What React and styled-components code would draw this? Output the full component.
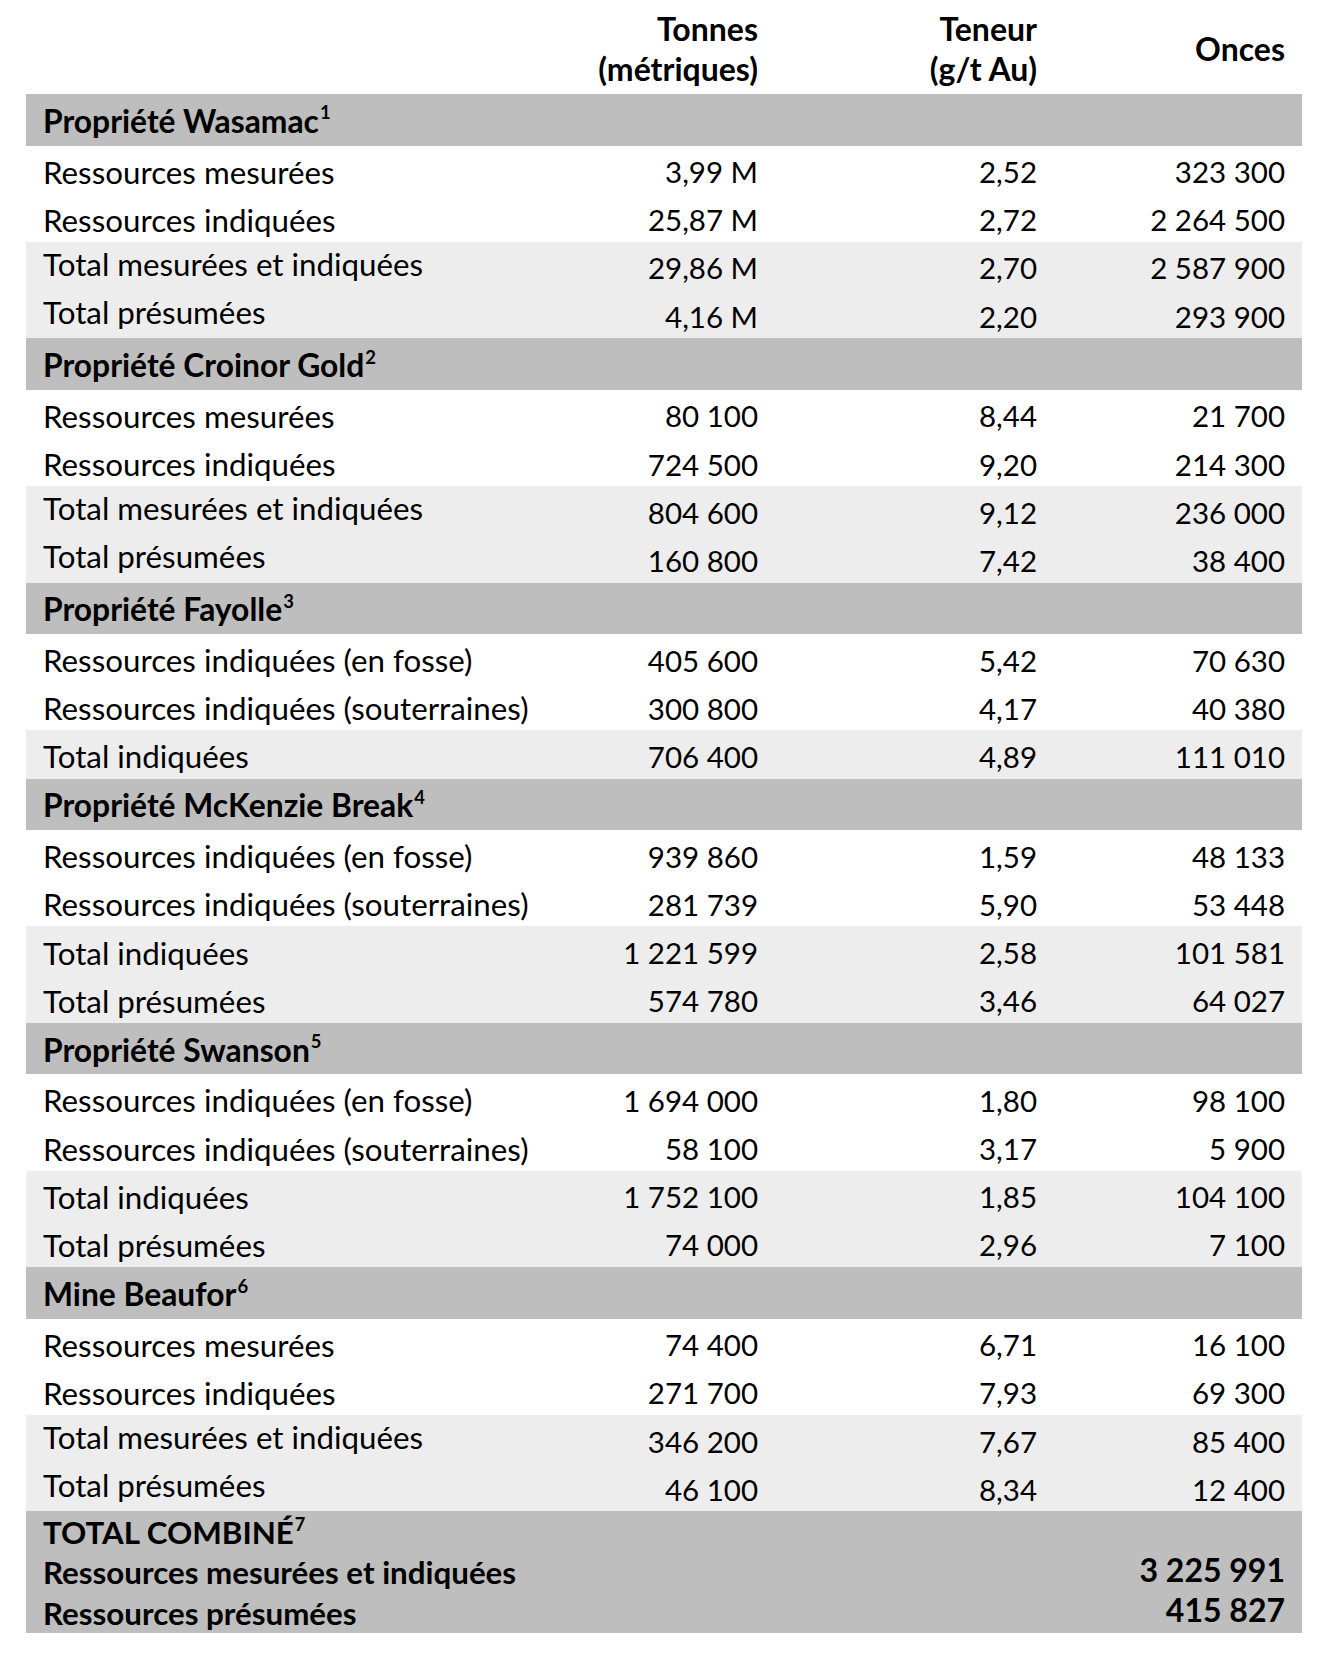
import React from "react";
import styled, { createGlobalStyle } from "styled-components";

const sections = [
    {
        title: "Propriété Wasamac", note: "1", rows: [
            { label: "Ressources mesurées", t: "3,99 M", g: "2,52", o: "323 300" },
            { label: "Ressources indiquées", t: "25,87 M", g: "2,72", o: "2 264 500" },
            { label: "Total mesurées et indiquées", t: "29,86 M", g: "2,70", o: "2 587 900", total: true, lift: true },
            { label: "Total présumées", t: "4,16 M", g: "2,20", o: "293 900", total: true, lift: true },
        ]
    },
    {
        title: "Propriété Croinor Gold", note: "2", rows: [
            { label: "Ressources mesurées", t: "80 100", g: "8,44", o: "21 700" },
            { label: "Ressources indiquées", t: "724 500", g: "9,20", o: "214 300" },
            { label: "Total mesurées et indiquées", t: "804 600", g: "9,12", o: "236 000", total: true, lift: true },
            { label: "Total présumées", t: "160 800", g: "7,42", o: "38 400", total: true, lift: true },
        ]
    },
    {
        title: "Propriété Fayolle", note: "3", rows: [
            { label: "Ressources indiquées (en fosse)", t: "405 600", g: "5,42", o: "70 630" },
            { label: "Ressources indiquées (souterraines)", t: "300 800", g: "4,17", o: "40 380" },
            { label: "Total indiquées", t: "706 400", g: "4,89", o: "111 010", total: true },
        ]
    },
    {
        title: "Propriété McKenzie Break", note: "4", rows: [
            { label: "Ressources indiquées (en fosse)", t: "939 860", g: "1,59", o: "48 133" },
            { label: "Ressources indiquées (souterraines)", t: "281 739", g: "5,90", o: "53 448" },
            { label: "Total indiquées", t: "1 221 599", g: "2,58", o: "101 581", total: true },
            { label: "Total présumées", t: "574 780", g: "3,46", o: "64 027", total: true },
        ]
    },
    {
        title: "Propriété Swanson", note: "5", rows: [
            { label: "Ressources indiquées (en fosse)", t: "1 694 000", g: "1,80", o: "98 100" },
            { label: "Ressources indiquées (souterraines)", t: "58 100", g: "3,17", o: "5 900" },
            { label: "Total indiquées", t: "1 752 100", g: "1,85", o: "104 100", total: true },
            { label: "Total présumées", t: "74 000", g: "2,96", o: "7 100", total: true },
        ]
    },
    {
        title: "Mine Beaufor", note: "6", rows: [
            { label: "Ressources mesurées", t: "74 400", g: "6,71", o: "16 100" },
            { label: "Ressources indiquées", t: "271 700", g: "7,93", o: "69 300" },
            { label: "Total mesurées et indiquées", t: "346 200", g: "7,67", o: "85 400", total: true, lift: true },
            { label: "Total présumées", t: "46 100", g: "8,34", o: "12 400", total: true, lift: true },
        ]
    },
];

export default function App() {
    return (
        <Wrapper>
            <GlobalStyle />
            <Table>
                <HeadRow>
                    <span />
                    <HeadCell>Tonnes<br />(métriques)</HeadCell>
                    <HeadCell>Teneur<br />(g/t Au)</HeadCell>
                    <HeadCell>Onces</HeadCell>
                </HeadRow>
                {sections.map((s) => (
                    <React.Fragment key={s.title}>
                        <SectionRow>
                            <span>{s.title}<Sup>{s.note}</Sup></span>
                        </SectionRow>
                        {s.rows.map((r) => (
                            <Row key={r.label} total={r.total}>
                                <Label lift={r.lift}>{r.label}</Label>
                                <Num>{r.t}</Num>
                                <Num>{r.g}</Num>
                                <Num>{r.o}</Num>
                            </Row>
                        ))}
                    </React.Fragment>
                ))}
                <GrandTotal>
                    <BoldLabel>TOTAL COMBINÉ<Sup>7</Sup></BoldLabel>
                    <span />
                    <BoldLabel>Ressources mesurées et indiquées</BoldLabel>
                    <BigNum>3 225 991</BigNum>
                    <BoldLabel>Ressources présumées</BoldLabel>
                    <BigNum>415 827</BigNum>
                </GrandTotal>
            </Table>
        </Wrapper>
    );
}

const GlobalStyle = createGlobalStyle`
    body {
        margin: 0;
        background: #ffffff;
        color: #000000;
        font-family: Lato, "Open Sans", sans-serif;
    }
`

let Wrapper = styled.div`
    padding: 0 0 28px 26px;
`

const cols = "534px 215px 279px 248px";

const Table = styled.div`
    width: 1276px;
    font-size: 31.3px;
`

const HeadRow = styled.div`
    display: grid;
    grid-template-columns: ${cols};
    align-items: center;
    height: 94px;
    padding-top: 4px;
    box-sizing: border-box;
`

const HeadCell = styled.div`
    font-weight: 700;
    font-size: 32px;
    text-align: right;
    padding-right: 17px;
    line-height: 40px;
`

const SectionRow = styled.div`
    display: flex;
    align-items: center;
    height: 51.5px;
    background: #bebebe;
    padding: 2px 0 0 17px;
    box-sizing: border-box;
    font-weight: 700;
    font-size: 31.8px;
`

const Sup = styled.sup`
    font-size: 0.58em;
    font-weight: 700;
    line-height: 0;
    vertical-align: 0.72em;
    margin-left: 1px;
`

const Row = styled.div`
    display: grid;
    grid-template-columns: ${cols};
    align-items: center;
    height: 48.2px;
    padding-top: 4px;
    box-sizing: border-box;
    background: ${(p) => (p.total ? "#ededed" : "#ffffff")};
`

const Label = styled.div`
    padding-left: 17px;
    white-space: nowrap;
    position: relative;
    top: ${(p) => (p.lift ? "-4px" : "0")};
`

const Num = styled.div`
    font-size: 29.5px;
    text-align: right;
    padding-right: 17px;
    white-space: nowrap;
`

const GrandTotal = styled.div`
    display: grid;
    grid-template-columns: 1fr auto;
    grid-auto-rows: 40.6px;
    align-items: center;
    background: #bebebe;
    height: 121.8px;
`

const BoldLabel = styled.div`
    font-weight: 700;
    font-size: 31.3px;
    padding-left: 17px;
    white-space: nowrap;
`

const BigNum = styled.div`
    font-weight: 700;
    font-size: 32px;
    text-align: right;
    padding-right: 17px;
    white-space: nowrap;
    position: relative;
    top: -3px;
`
